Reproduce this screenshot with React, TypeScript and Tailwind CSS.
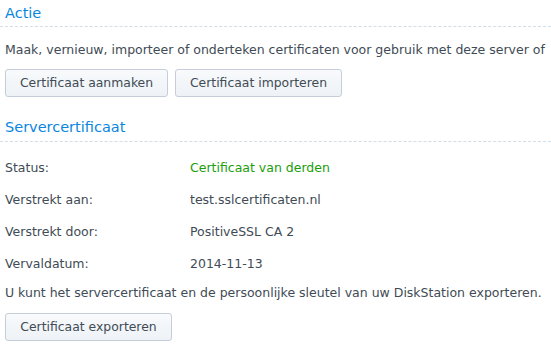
export default function App() {
  const rows = [
    { label: "Status:", value: "Certificaat van derden", green: true },
    { label: "Verstrekt aan:", value: "test.sslcertificaten.nl" },
    { label: "Verstrekt door:", value: "PositiveSSL CA 2" },
    { label: "Vervaldatum:", value: "2014-11-13" },
  ];

  const btn =
    "h-[28px] rounded-[3px] border border-[#c5ced8] bg-gradient-to-b from-[#f8fafc] to-[#eef2f6] text-[12.4px] text-[#414b55]";

  return (
    <div className="h-[346px] w-[551px] overflow-hidden bg-white text-[12.5px] text-[#414b55] [font-family:'DejaVu_Sans',Tahoma,sans-serif]">
      <div className="border-b border-dashed border-[#d3dde7] px-[5px] pt-[4px] pb-[4px] text-[14.5px] leading-[18px] text-[#0a86e0]">
        Actie
      </div>
      <p className="mt-[15px] whitespace-nowrap px-[5px] leading-[16px]">
        Maak, vernieuw, importeer of onderteken certificaten voor gebruik met deze server of
      </p>
      <div className="mt-[11px] flex gap-[7px] px-[5px]">
        <button className={btn + " w-[163px]"}>Certificaat aanmaken</button>
        <button className={btn + " w-[167px]"}>Certificaat importeren</button>
      </div>
      <div className="mt-[21px] border-b border-dashed border-[#d3dde7] px-[5px] pb-[5px] text-[14.5px] leading-[18px] text-[#0a86e0]">
        Servercertificaat
      </div>
      <div className="mt-[10px] flex flex-col">
        {rows.map((r) => (
          <div key={r.label} className="flex h-[32px] items-center px-[5px]">
            <span className="w-[185px]">{r.label}</span>
            <span className={r.green ? "text-[#1a9e0a]" : ""}>{r.value}</span>
          </div>
        ))}
      </div>
      <p className="mt-[5px] whitespace-nowrap px-[5px] leading-[16px]">
        U kunt het servercertificaat en de persoonlijke sleutel van uw DiskStation exporteren.
      </p>
      <div className="mt-[12px] px-[5px]">
        <button className={btn + " w-[167px]"}>Certificaat exporteren</button>
      </div>
    </div>
  );
}
